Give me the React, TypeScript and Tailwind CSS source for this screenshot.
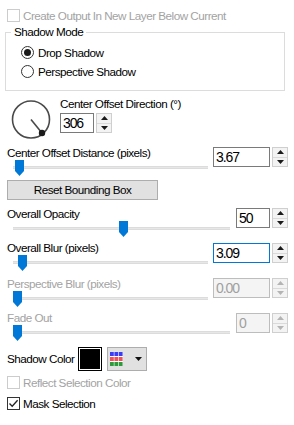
import React from "react";

const Tri = ({ up, dim }: { up: boolean; dim?: boolean }) => (
  <svg width="7" height="4" viewBox="0 0 7 4">
    <path
      d={up ? "M3.5 0 L7 4 L0 4 Z" : "M0 0 L7 0 L3.5 4 Z"}
      fill={dim ? "#b4b4b4" : "#1a1a1a"}
    />
  </svg>
);

const SpinBox = ({
  value,
  wide,
  focused,
  disabled,
}: {
  value: string;
  wide?: boolean;
  focused?: boolean;
  disabled?: boolean;
}) => (
  <div className="flex gap-[2px] h-[20px]">
    <div
      className={`${wide ? "w-[57px]" : "w-[34px]"} h-full border flex items-center pl-[2px] text-[14px] tracking-[-1.1px] ${
        focused
          ? "border-[#0078d7] bg-white text-black"
          : disabled
          ? "border-[#bdbdbd] bg-[#f4f4f4] text-[#a0a0a0]"
          : "border-[#7a7a7a] bg-white text-black"
      }`}
    >
      {value}
    </div>
    <div className="w-[16px] h-full flex flex-col border border-[#cfcfcf]">
      <div className="flex-1 flex items-center justify-center bg-[#f3f3f3] border-b border-[#dadada]">
        <Tri up dim={disabled} />
      </div>
      <div className="flex-1 flex items-center justify-center bg-[#f3f3f3]">
        <Tri up={false} dim={disabled} />
      </div>
    </div>
  </div>
);

const Thumb = () => (
  <svg width="9" height="16" viewBox="0 0 9 16">
    <path d="M0 0 H9 V11 L4.5 16 L0 11 Z" fill="#0078d7" />
  </svg>
);

const SliderRow = ({
  label,
  width,
  thumb,
  value,
  wide,
  focused,
  disabled,
  boxTop,
  height,
}: {
  label: string;
  width: string;
  thumb: string;
  value: string;
  wide?: boolean;
  focused?: boolean;
  disabled?: boolean;
  boxTop: string;
  height: string;
}) => (
  <div className={`flex pr-[6px] ${height}`}>
    <div className={`${width} flex flex-col`}>
      <div
        className={`pl-[7px] h-[14px] leading-[14px] whitespace-nowrap ${
          disabled ? "text-[#a3a3a3]" : "text-black"
        }`}
      >
        {label}
      </div>
      <div className="relative h-[17px]">
        <div className="absolute left-[13px] right-0 top-[6px] h-[3px] bg-[#e7e7e7] border-y border-[#dcdcdc]" />
        <div className={`absolute top-0 ${thumb}`}>
          <Thumb />
        </div>
      </div>
    </div>
    <div className={`ml-auto ${boxTop}`}>
      <SpinBox value={value} wide={wide} focused={focused} disabled={disabled} />
    </div>
  </div>
);

const CheckBox = ({ checked, disabled }: { checked?: boolean; disabled?: boolean }) => (
  <div
    className={`w-[13px] h-[13px] border bg-white flex items-center justify-center ${
      disabled ? "border-[#cccccc]" : "border-[#333333]"
    }`}
  >
    {checked && (
      <svg width="11" height="11" viewBox="0 0 11 11">
        <path d="M1.5 5.5 L4.2 8.3 L9.6 2.2" stroke="#222" strokeWidth="1.3" fill="none" />
      </svg>
    )}
  </div>
);

const Radio = ({ checked }: { checked?: boolean }) => (
  <div className="w-[13px] h-[13px] rounded-full border border-[#333333] bg-white flex items-center justify-center">
    {checked && <div className="w-[7px] h-[7px] rounded-full bg-[#1a1a1a]" />}
  </div>
);

export default function App() {
  return (
    <div className="w-[294px] h-[425px] bg-white overflow-hidden font-['Liberation_Sans',Arial,sans-serif] text-[11.7px] tracking-[-0.5px] text-black">
      {/* top checkbox */}
      <div className="flex items-center h-[13px] mt-[9px] ml-[7px] gap-[3px]">
        <CheckBox disabled />
        <span className="text-[#a3a3a3] whitespace-nowrap">
          Create Output In New Layer Below Current
        </span>
      </div>

      {/* Shadow mode group */}
      <div className="relative ml-[5px] mt-[10px] w-[280px] h-[59px] border border-[#dcdcdc]">
        <span className="absolute left-[5px] -top-[8px] px-[3px] bg-white leading-[14px]">
          Shadow Mode
        </span>
        <div className="flex flex-col gap-[6px] pl-[15px] pt-[13px]">
          <div className="flex items-center gap-[4px] h-[13px]">
            <Radio checked />
            <span>Drop Shadow</span>
          </div>
          <div className="flex items-center gap-[4px] h-[13px]">
            <Radio />
            <span>Perspective Shadow</span>
          </div>
        </div>
      </div>

      {/* direction dial */}
      <div className="flex items-start h-[49px] mt-[6px]">
        <svg width="40" height="40" viewBox="0 0 40 40" className="ml-[11px] mt-[3px]">
          <circle cx="20" cy="19.5" r="18.5" stroke="#4a4a4a" strokeWidth="1.6" fill="none" />
          <line x1="20" y1="19.5" x2="31" y2="33" stroke="#4a4a4a" strokeWidth="1.6" />
          <circle cx="31" cy="33" r="3.2" fill="#1a1a1a" />
        </svg>
        <div className="ml-[9px] flex flex-col">
          <div className="h-[14px] leading-[14px] whitespace-nowrap">
            Center Offset Direction (°)
          </div>
          <div className="mt-[2px]">
            <SpinBox value="306" />
          </div>
        </div>
      </div>

      <SliderRow
        label="Center Offset Distance (pixels)"
        width="w-[208px]"
        thumb="left-[15px]"
        value="3.67"
        wide
        boxTop="mt-[1px]"
        height="h-[31px]"
      />

      <div className="ml-[7px] mt-[3px] w-[151px] h-[20px] bg-[#e1e1e1] border border-[#adadad] flex items-center justify-center">
        Reset Bounding Box
      </div>

      <div className="mt-[7px]">
        <SliderRow
          label="Overall Opacity"
          width="w-[230px]"
          thumb="left-[119px]"
          value="50"
          boxTop="mt-[1px]"
          height="h-[34px]"
        />
        <SliderRow
          label="Overall Blur (pixels)"
          width="w-[208px]"
          thumb="left-[18px]"
          value="3.09"
          wide
          focused
          boxTop="mt-[2px]"
          height="h-[36px]"
        />
        <SliderRow
          label="Perspective Blur (pixels)"
          width="w-[208px]"
          thumb="left-[13px]"
          value="0.00"
          wide
          disabled
          boxTop="mt-[1px]"
          height="h-[34px]"
        />
        <SliderRow
          label="Fade Out"
          width="w-[230px]"
          thumb="left-[13px]"
          value="0"
          disabled
          boxTop="mt-[2px]"
          height="h-[34px]"
        />
      </div>

      {/* shadow color */}
      <div className="flex items-center h-[24px] mt-[2px] pl-[7px]">
        <span className="w-[71px] whitespace-nowrap">Shadow Color</span>
        <div className="w-[24px] h-[24px] border border-black bg-white p-[1px]">
          <div className="w-full h-full bg-black" />
        </div>
        <div className="ml-[5px] w-[40px] h-[24px] bg-[#e1e1e1] border border-[#adadad] flex items-center pl-[2px] gap-[12px]">
          <svg width="13" height="14" viewBox="0 0 13 14">
            <rect x="0" y="0" width="13" height="14" fill="#ffffff" />
            {[0, 1, 2].map((c) => (
              <React.Fragment key={c}>
                <rect x={c * 4.4} y="0" width="3.8" height="4" fill="#3a3cf5" />
                <rect x={c * 4.4} y="5" width="3.8" height="4" fill="#f0505a" />
                <rect x={c * 4.4} y="10" width="3.8" height="4" fill="#2e9a3c" />
              </React.Fragment>
            ))}
          </svg>
          <svg width="7" height="4" viewBox="0 0 7 4">
            <path d="M0 0 L7 0 L3.5 4 Z" fill="#111" />
          </svg>
        </div>
      </div>

      <div className="flex items-center h-[13px] mt-[5px] ml-[7px] gap-[3px]">
        <CheckBox disabled />
        <span className="text-[#a3a3a3] whitespace-nowrap">Reflect Selection Color</span>
      </div>

      <div className="flex items-center h-[13px] mt-[8px] ml-[7px] gap-[3px]">
        <CheckBox checked />
        <span className="whitespace-nowrap">Mask Selection</span>
      </div>
    </div>
  );
}
